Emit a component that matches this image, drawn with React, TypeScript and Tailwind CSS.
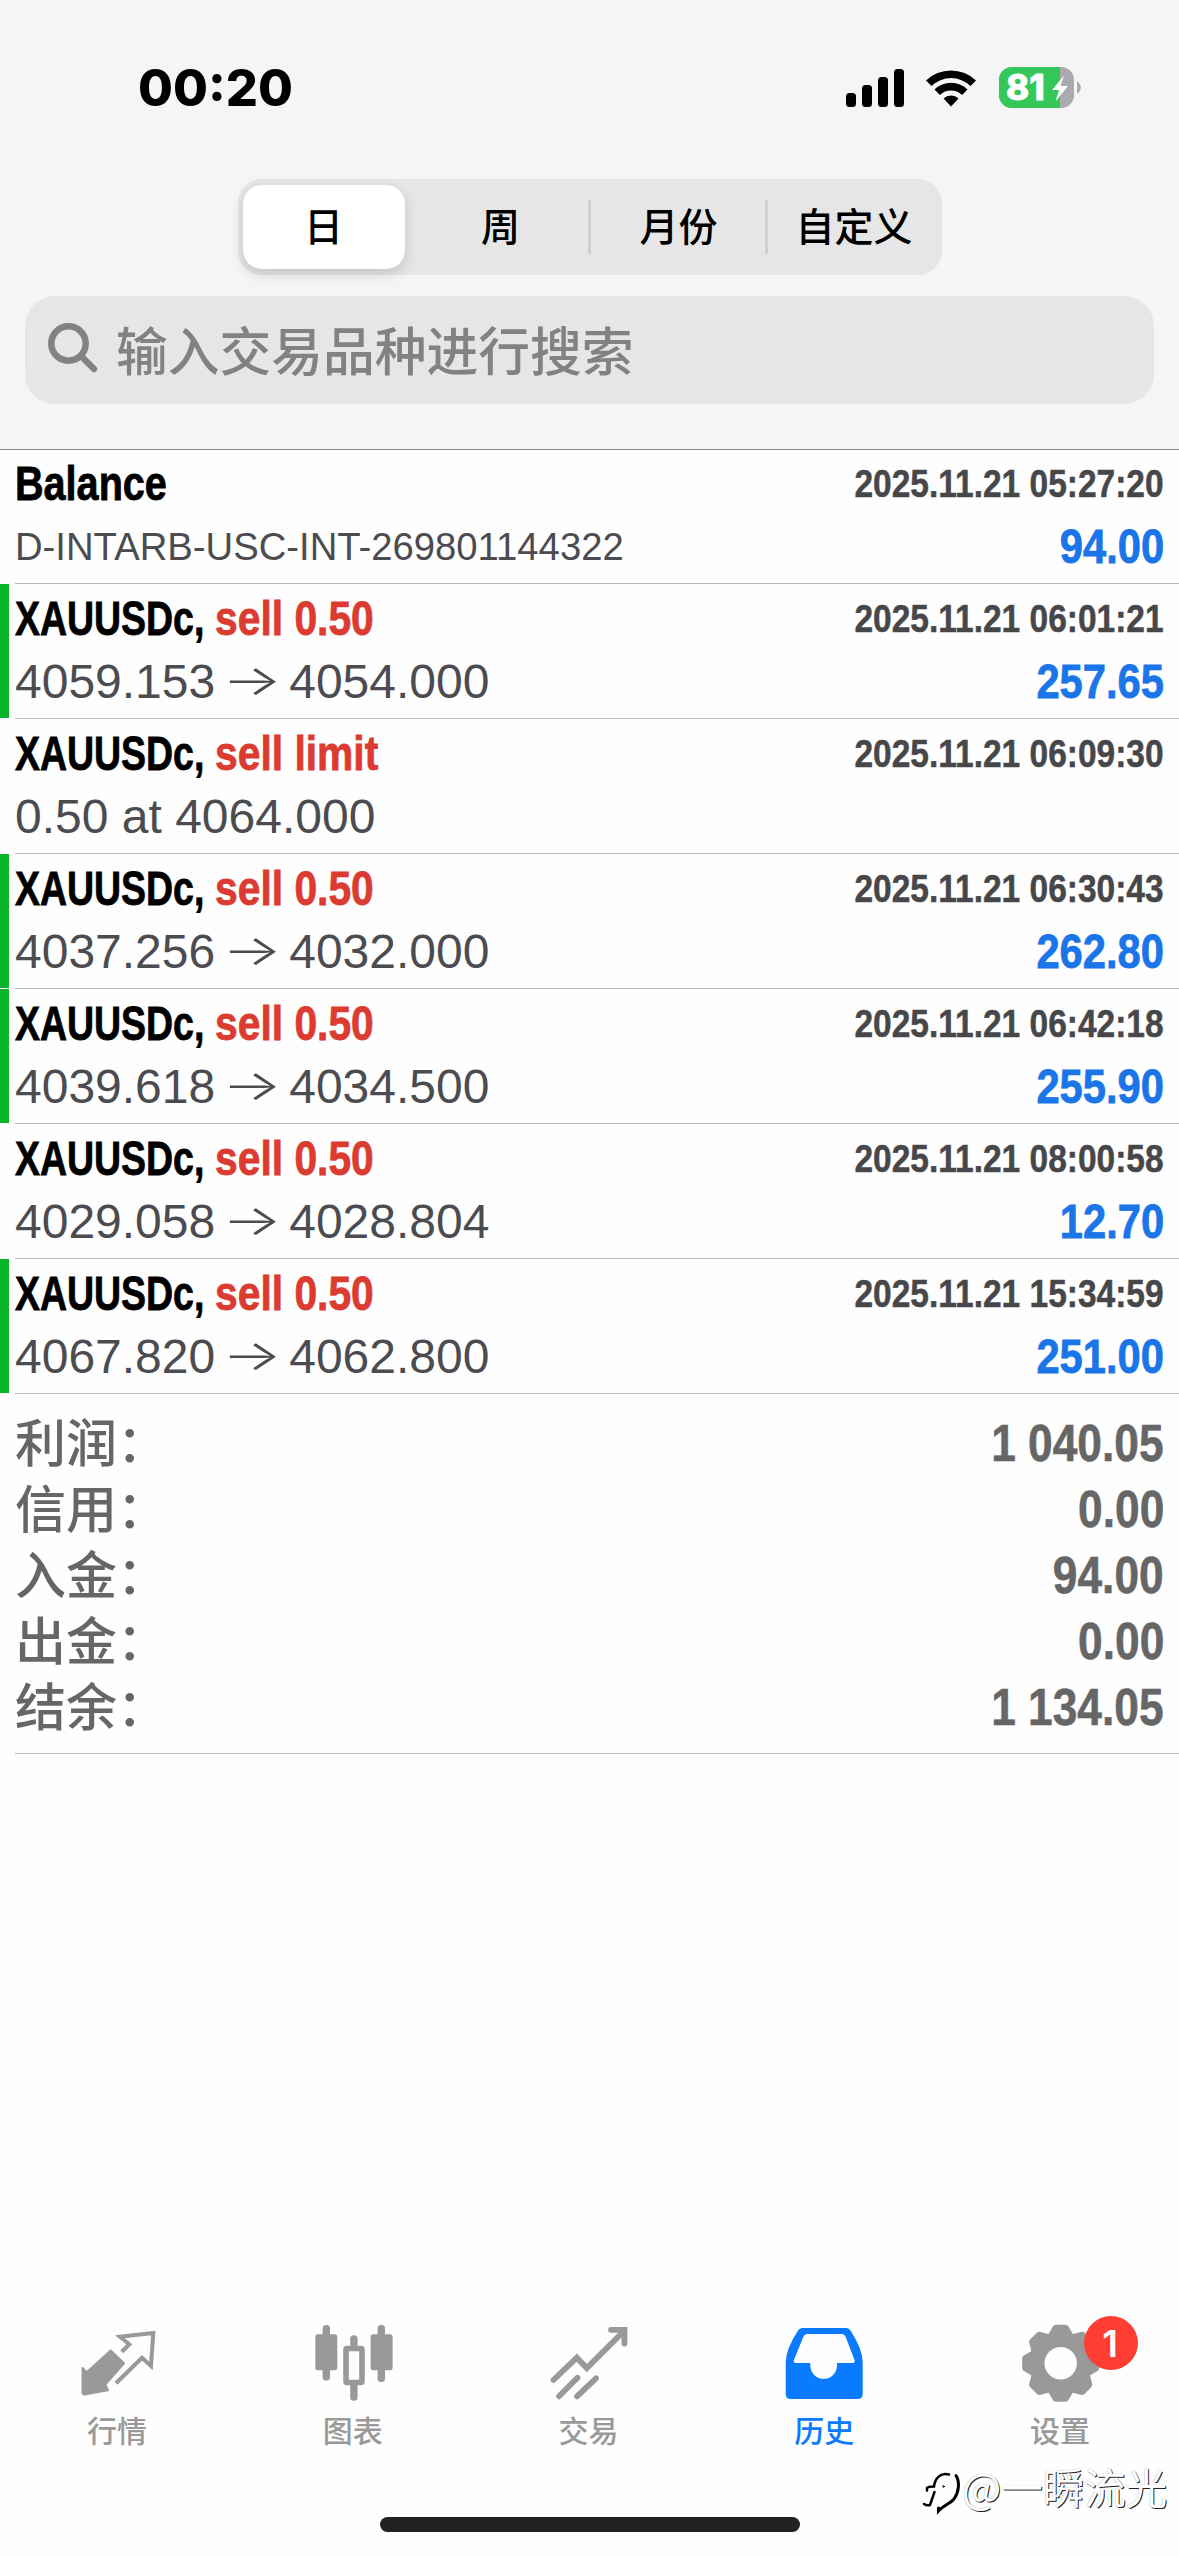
import React from "react";

const deals = [
  { title: "Balance", side: "", detail: "D-INTARB-USC-INT-269801144322", to: "", time: "2025.11.21 05:27:20", profit: "94.00", tp: false },
  { title: "XAUUSDc,", side: "sell 0.50", detail: "4059.153", to: "4054.000", time: "2025.11.21 06:01:21", profit: "257.65", tp: true },
  { title: "XAUUSDc,", side: "sell limit", detail: "0.50 at 4064.000", to: "", time: "2025.11.21 06:09:30", profit: "", tp: false },
  { title: "XAUUSDc,", side: "sell 0.50", detail: "4037.256", to: "4032.000", time: "2025.11.21 06:30:43", profit: "262.80", tp: true },
  { title: "XAUUSDc,", side: "sell 0.50", detail: "4039.618", to: "4034.500", time: "2025.11.21 06:42:18", profit: "255.90", tp: true },
  { title: "XAUUSDc,", side: "sell 0.50", detail: "4029.058", to: "4028.804", time: "2025.11.21 08:00:58", profit: "12.70", tp: false },
  { title: "XAUUSDc,", side: "sell 0.50", detail: "4067.820", to: "4062.800", time: "2025.11.21 15:34:59", profit: "251.00", tp: true },
];

const totals = [
  ["利润：", "1 040.05"],
  ["信用：", "0.00"],
  ["入金：", "94.00"],
  ["出金：", "0.00"],
  ["结余：", "1 134.05"],
];

const gearTeeth = [0, 45, 90, 135, 180, 225, 270, 315];

function StatusBar() {
  return (
    <div className="flex h-[179px] items-start justify-between pl-[138px] pr-[97px] pt-[67px]">
      <div className="font-['Inter'] text-[50.500px] font-extrabold leading-[41px]">00:20</div>
      <div className="flex h-[41px] items-center">
        <svg width="58" height="38" viewBox="0 0 58 38" className="mr-[22px]">
          <rect x="0" y="24" width="10" height="14" rx="3.500" />
          <rect x="16" y="16" width="10" height="22" rx="3.500" />
          <rect x="32" y="8" width="10" height="30" rx="3.500" />
          <rect x="48" y="0" width="10" height="38" rx="3.500" />
        </svg>
        <svg width="50" height="38" viewBox="0 0 50 38" className="mr-[23px]">
          <path d="M0 11.500A36 36 0 0 1 50 11.500L44.500 17A28 28 0 0 0 5.500 17Z" />
          <path d="M8.500 20.500A23.500 23.500 0 0 1 41.500 20.500L36 26A16 16 0 0 0 14 26Z" />
          <path d="M17.500 29.500A11 11 0 0 1 32.500 29.500L25 37.500Z" />
        </svg>
        <svg width="83" height="41" viewBox="0 0 83 41" className="overflow-visible">
          <defs>
            <clipPath id="battery">
              <rect width="75" height="41" rx="13" />
            </clipPath>
          </defs>
          <g clipPath="url(#battery)">
            <rect width="75" height="41" fill="#a9a9ae" />
            <rect width="61" height="41" fill="#34c759" />
          </g>
          <path d="M78 14.500C83 16.500 83 24.500 78 26.500Z" fill="#a9a9ae" />
          <text x="7" y="33" fill="#fff" stroke="#fff" strokeWidth="0.800" fontFamily="Inter" fontWeight="800" fontSize="35">81</text>
          <path d="M65 8.500L53 23H60L56.500 34.500L69 19H61.500Z" fill="#fff" />
        </svg>
      </div>
    </div>
  );
}

function PeriodTabs() {
  return (
    <div className="mx-auto flex h-24 w-[704px] rounded-[24px] bg-[#e6e6e6] p-1.5 pl-[5px] text-[39px] font-medium leading-none">
      <div className="flex h-[84px] w-[162px] justify-center rounded-[19px] bg-white pt-[20px] shadow-[0_5px_14px_rgba(0,0,0,0.15)]">日</div>
      <div className="mt-[15px] flex h-[54px] w-[186px] justify-center border-r-[3px] border-[#d0d0d1] pl-[9px] pt-[5px]">周</div>
      <div className="mt-[15px] flex h-[54px] w-[177px] justify-center border-r-[3px] border-[#d0d0d1] pl-[2px] pt-[5px]">月份</div>
      <div className="flex flex-1 justify-center pl-[5px] pt-[20px]">自定义</div>
    </div>
  );
}

function DealRow({ deal }: { deal: (typeof deals)[number] }) {
  return (
    <div className="flex h-[135px]">
      <div className={deal.tp ? "h-[134px] w-[9px] bg-[#0ab42b]" : "h-[134px] w-[9px]"}></div>
      <div className="ml-1.5 flex flex-1 flex-col border-b border-[#b8b8bb] pr-[15px] pt-px font-['Liberation_Sans']">
        <div className="flex h-[67px] items-center justify-between text-[48px] font-bold leading-none [-webkit-text-stroke:0.8px]">
          <div className="flex">
            <span className={deal.side ? "w-[200px] origin-left scale-x-[0.78] whitespace-nowrap" : "origin-left scale-x-[0.825]"}>{deal.title}</span>
            <span className="origin-left scale-x-[0.85] whitespace-nowrap text-[#db3b30]">{deal.side}</span>
          </div>
          <div className="origin-right scale-x-[0.848] whitespace-nowrap text-[39.500px] text-[#47474a] [-webkit-text-stroke:0.5px]">{deal.time}</div>
        </div>
        <div className="flex h-[60px] items-center justify-between text-[#4c4c50]">
          {deal.side === "" ? (
            <div className="whitespace-nowrap text-[38.250px] leading-none">{deal.detail}</div>
          ) : (
            <div className="flex items-center whitespace-nowrap text-[48px] leading-none">
              <span>{deal.detail}</span>
              {deal.to && <span className="-mt-[4px] w-[74px] scale-x-[1.5] text-center font-['Inter'] text-[42px] font-light">→</span>}
              <span>{deal.to}</span>
            </div>
          )}
          <div className="origin-right scale-x-[0.868] text-[48px] font-bold leading-none text-[#1a75e8] [-webkit-text-stroke:0.8px]">{deal.profit}</div>
        </div>
      </div>
    </div>
  );
}

function Tab({ label, active, children }: { label: string; active?: boolean; children: React.ReactNode }) {
  return (
    <div className={active ? "flex flex-1 flex-col items-center text-[#0a7aff]" : "flex flex-1 flex-col items-center text-[#999999]"}>
      <div className="relative h-20 w-20">{children}</div>
      <div className="mt-[7px] pr-[2px] text-[30px] font-medium leading-9">{label}</div>
    </div>
  );
}

export default function App() {
  return (
    <div className="relative flex h-[2556px] w-[1179px] flex-col overflow-hidden bg-[#fefefe] font-['Noto_Sans_CJK_SC',sans-serif] text-black">
      <header className="h-[450px] border-b border-[#88888a] bg-[#f5f5f5]">
        <StatusBar />
        <PeriodTabs />
        {/* Symbol search */}
        <div className="mx-[25px] mt-[21px] flex h-[108px] items-center rounded-[30px] bg-[#e6e6e8] pl-[23px] text-[#828284]">
          <svg width="51" height="51" viewBox="0 0 51 51" fill="none" stroke="currentColor" strokeWidth="6.500" strokeLinecap="round" className="-mt-[3px]">
            <circle cx="20.500" cy="20.500" r="17.200" />
            <path d="M33.500 33.500L46 46" />
          </svg>
          <span className="-mt-[3px] ml-[17px] text-[51.750px] font-medium leading-none">输入交易品种进行搜索</span>
        </div>
      </header>

      <main className="-mt-px flex-1">
        {deals.map((deal) => (
          <DealRow key={deal.time} deal={deal} />
        ))}
        {/* Totals */}
        <div className="ml-[15px] h-[360px] border-b border-[#b8b8bb] pr-[15px] pt-[16px] text-[#666666]">
          {totals.map(([label, value]) => (
            <div key={label} className="flex h-[66px] items-center justify-between">
              <span className="-mt-[6px] text-[51px] font-medium leading-none">{label}</span>
              <span className="origin-right scale-x-[0.868] font-['Liberation_Sans'] text-[51px] font-bold leading-none [-webkit-text-stroke:0.6px]">{value}</span>
            </div>
          ))}
        </div>
      </main>

      <nav className="flex h-[193px]">
        <Tab label="行情">
          <svg width="80" height="80" viewBox="0 0 80 80">
            <path d="M43.700 27.700L51.300 20.300L42 12.700L75.300 9L73 42L64 33.700L38 59.300" fill="none" stroke="currentColor" strokeWidth="4" />
            <path d="M32.700 26.500L46 39.300L27.500 60.300L30 66.300L6 70.500L4.500 69V44L8.700 48.300Z" fill="currentColor" stroke="currentColor" strokeWidth="2" strokeLinejoin="round" />
          </svg>
        </Tab>
        <Tab label="图表">
          <svg width="80" height="80" viewBox="0 0 80 80" fill="currentColor">
            <rect x="8.600" y="1" width="7.400" height="55.500" rx="3.500" />
            <rect x="1.300" y="10.300" width="22" height="36" rx="2.500" />
            <rect x="36.200" y="11.300" width="7.400" height="12" rx="3.500" />
            <rect x="36.200" y="57" width="7.400" height="19.700" rx="3.500" />
            <rect x="32" y="24.500" width="16" height="34" rx="1" fill="none" stroke="currentColor" strokeWidth="5.600" />
            <rect x="63.600" y="1" width="7.400" height="57" rx="3.500" />
            <rect x="56.600" y="10.300" width="22" height="36" rx="2.500" />
          </svg>
        </Tab>
        <Tab label="交易">
          <svg width="80" height="80" viewBox="0 0 80 80" fill="none" stroke="currentColor" strokeWidth="5.800" strokeLinecap="round">
            <path d="M4.500 56L27.800 33.700L37.800 44L75 7" />
            <path d="M62 5.800H75.500V19.500" />
            <path d="M10 72.300L28.500 53.800M28 72.300L47 54.300" />
          </svg>
        </Tab>
        <Tab label="历史" active>
          <svg width="80" height="80" viewBox="0 0 80 80" fill="currentColor">
            <path
              fillRule="evenodd"
              d="M17 4H61.500Q64 4 65.500 6.500Q77.500 25 77.700 38V70Q77.700 75 72.700 75H5.700Q0.700 75 0.700 70V38Q1 25 13 6.500Q14.500 4 17 4ZM22 10Q19.500 10 18.500 12.500L8.900 36Q8 39 11 39H25.300V41.500A13.300 13.300 0 0 0 52 41.500V39H67.500Q70.500 39 69.500 36L60.500 12.500Q59.500 10 57 10Z"
            />
          </svg>
        </Tab>
        <Tab label="设置">
          <svg width="80" height="80" viewBox="0 0 80 80" fill="currentColor">
            {gearTeeth.map((deg) => (
              <path key={deg} transform={`translate(39.700 39.300) rotate(${deg})`} d="M-13.500 -27L-8.500 -35.500Q-7.300 -38.500 -4.500 -38.500H4.500Q7.300 -38.500 8.500 -35.500L13.500 -27Z" />
            ))}
            <circle cx="39.700" cy="39.300" r="23.500" fill="none" stroke="currentColor" strokeWidth="14.500" />
          </svg>
          <span className="absolute -top-[8px] left-[63px] flex h-[54px] w-[54px] items-center justify-center rounded-full bg-[#ff3e33] pr-[2px] font-['Inter'] text-[37px] font-semibold leading-none text-white">1</span>
        </Tab>
      </nav>
      {/* Home indicator */}
      <div className="mx-auto mb-6 h-[15px] w-[420px] rounded-full bg-[#222222]"></div>

      {/* Watermark */}
      <div className="absolute left-[922px] top-[2461px] flex items-start">
        <svg width="40" height="54" viewBox="0 0 40 54" fill="none" stroke="#000" strokeLinecap="round" className="mt-[3px]">
          <path strokeWidth="2.500" d="M5 26.500V24Q6 22.500 12 22.500C13 14 19 8 27 10.500" />
          <path strokeWidth="3" d="M34 11.500C38 18 37 28 32 35C28 40 22 41 16.500 47V44" />
          <path strokeWidth="2.500" d="M12.500 28L8 41Q5 42 2 40" />
          <circle cx="21.500" cy="22.500" r="0.800" />
        </svg>
        <span className="whitespace-nowrap text-[41.500px] leading-[50px] text-white [text-shadow:1px_1px_0_#222,0_0_1px_#999]">@一瞬流光</span>
      </div>
    </div>
  );
}
